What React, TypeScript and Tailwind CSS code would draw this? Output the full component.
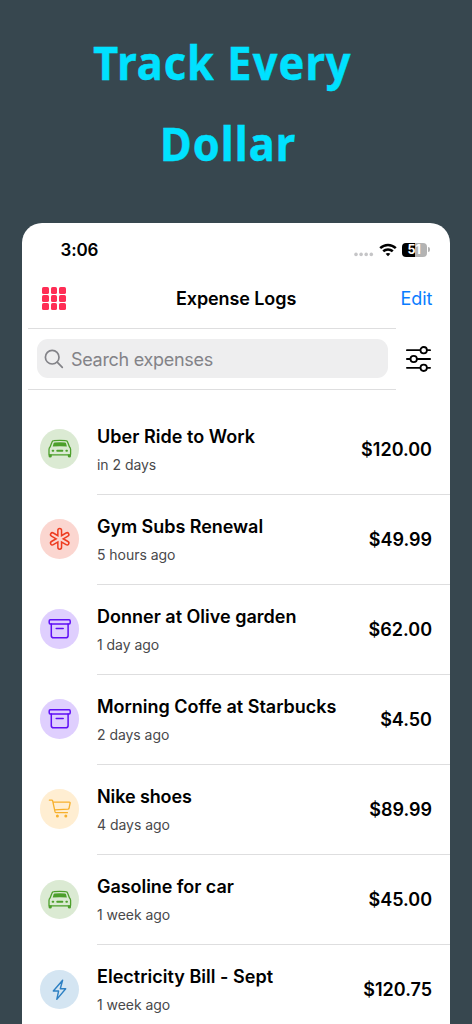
import React from 'react';
import clsx from 'clsx';

type IconName = 'car' | 'health' | 'box' | 'cart' | 'bolt';

const expenses: {title: string; time: string; amount: string; icon: IconName; titleClass: string}[] = [
    {title: 'Uber Ride to Work', time: 'in 2 days', amount: '$120.00', icon: 'car', titleClass: 'tracking-[0.04px]'},
    {title: 'Gym Subs Renewal', time: '5 hours ago', amount: '$49.99', icon: 'health', titleClass: 'tracking-[-0.05px]'},
    {title: 'Donner at Olive garden', time: '1 day ago', amount: '$62.00', icon: 'box', titleClass: 'tracking-[0px]'},
    {title: 'Morning Coffe at Starbucks', time: '2 days ago', amount: '$4.50', icon: 'box', titleClass: 'tracking-[-0.01px]'},
    {title: 'Nike shoes', time: '4 days ago', amount: '$89.99', icon: 'cart', titleClass: 'tracking-[-0.1px]'},
    {title: 'Gasoline for car', time: '1 week ago', amount: '$45.00', icon: 'car', titleClass: 'tracking-[-0.05px]'},
    {title: 'Electricity Bill - Sept', time: '1 week ago', amount: '$120.75', icon: 'bolt', titleClass: 'tracking-[0.02px]'},
];

const iconColors: Record<IconName, string> = {
    car: 'bg-[#dbead3] text-[#4c9f2b]',
    health: 'bg-[#fbd6d0] text-[#ee3c20]',
    box: 'bg-[#dfcffe] text-[#5f0ff5]',
    cart: 'bg-[#ffeed2] text-[#f7b02c]',
    bolt: 'bg-[#d4e5f2] text-[#2d80c3]',
};

function CategoryGlyph({name}: {name: IconName}) {
    switch (name) {
        case 'car':
            return (
                <>
                    <path d="M9 25.2V20.4Q9 18.9 10.2 17.7L11.9 13.3Q12.4 11.7 14 11.6Q19.8 11.1 25.6 11.6Q27.2 11.7 27.7 13.3L29.4 17.7Q30.6 18.9 30.6 20.4V25.2Q30.6 25.9 29.9 25.9H9.7Q9 25.9 9 25.2Z" strokeWidth="1.3"/>
                    <path d="M14.6 13.4Q19.8 12.9 25 13.4Q25.7 13.5 25.9 14.1L26.9 17.6Q19.8 17.1 12.7 17.6L13.7 14.1Q13.9 13.5 14.6 13.4Z" fill="currentColor" stroke="none"/>
                    <path d="M8.6 25.5V27.2Q8.6 28.6 10.2 28.6Q11.8 28.6 11.8 27.2V25.5ZM27.8 25.5V27.2Q27.8 28.6 29.4 28.6Q31 28.6 31 27.2V25.5Z" fill="currentColor" stroke="none"/>
                    <path d="M12.6 21.8H13.3M17.2 21.8H22.4M26.3 21.8H27" strokeWidth="1.9"/>
                </>
            );
        case 'health':
            return (
                <>
                    <path d="M19.7 11.4V28.3M12.4 15.6L27 24.1M12.4 24.1L27 15.6" strokeWidth="5.2"/>
                    <path d="M19.7 11.4V28.3M12.4 15.6L27 24.1M12.4 24.1L27 15.6" strokeWidth="2.2" stroke="#fbd6d0"/>
                </>
            );
        case 'box':
            return (
                <>
                    <rect x="9.2" y="10.8" width="21" height="4.1" rx="1.1" strokeWidth="1.5"/>
                    <path d="M11.3 15V26.4Q11.3 28.8 13.7 28.8H25.7Q28.1 28.8 28.1 26.4V15M16.2 19.4H23.2" strokeWidth="1.5"/>
                </>
            );
        case 'cart':
            return (
                <>
                    <path d="M9.4 11.2H11.7Q12.5 11.2 12.7 12L15 22.7Q15.3 23.7 16.3 23.7H27.4M13.1 13.2H29.4Q30.3 13.2 30.1 14.1L29.1 19Q28.9 20 27.9 20.1L14.6 20.9" strokeWidth="1.3"/>
                    <circle cx="17.4" cy="27" r="1.5" fill="currentColor" stroke="none"/>
                    <circle cx="25.8" cy="27" r="1.5" fill="currentColor" stroke="none"/>
                </>
            );
        case 'bolt':
            return <path d="M22.6 10.3L13.3 21H18.6L16.8 29.4L25.7 18.8H20.3Z" strokeWidth="1.4"/>;
    }
}

function CategoryIcon({name}: {name: IconName}) {
    return (
        <div className={clsx('mb-[1.4px] size-[39.5px] shrink-0 rounded-full', iconColors[name])}>
            <svg viewBox="0 0 39.5 39.5" className="size-full" fill="none" stroke="currentColor" strokeLinecap="round" strokeLinejoin="round">
                <CategoryGlyph name={name}/>
            </svg>
        </div>
    );
}

function StatusBar() {
    return (
        <div className="flex h-[54px] items-center justify-between pl-[38.5px] pr-[20.5px]">
            <span className="pt-[3px] text-[17px] font-semibold tracking-[-0.15px]">3:06</span>
            <div className="flex items-center">
                <svg width="20" height="16" viewBox="0 0 20 16" className="mr-[5px]" fill="#c5c5c7">
                    <circle cx="2" cy="12.4" r="1.8"/>
                    <circle cx="7.1" cy="12.4" r="1.8"/>
                    <circle cx="12.2" cy="12.4" r="1.8"/>
                    <circle cx="17.3" cy="12.4" r="1.8"/>
                </svg>
                <svg width="18" height="14" viewBox="0 0 18 14" className="mr-[5px]" fill="none" stroke="#000" strokeWidth="2.5">
                    <path d="M1.2 5.2Q4.6 1.9 9 1.9T16.8 5.2"/>
                    <path d="M4.2 8.3Q6.3 6.4 9 6.4T13.8 8.3"/>
                    <path d="M9 13.2L6.6 10.8Q9 9 11.4 10.8Z" fill="#000" stroke="none"/>
                </svg>
                <div className="flex h-[14px] w-[25.5px] items-center justify-center rounded-[4px] bg-linear-to-r from-black from-51% to-[#b3b3b3] to-51%">
                    <span className="text-[12.5px] font-bold leading-[14px] text-white">51</span>
                </div>
                <div className="ml-[1px] h-[5px] w-[1.5px] rounded-r-full bg-[#b3b3b3]"/>
            </div>
        </div>
    );
}

function GridIcon() {
    return (
        <div className="grid grid-cols-3 gap-x-[2px] gap-y-[1.5px]">
            {Array.from({length: 9}, (_, i) => (
                <span key={i} className="size-[6.6px] rounded-[1.6px] bg-[#ff2d55]"/>
            ))}
        </div>
    );
}

function SearchRow() {
    return (
        <div className="flex items-center">
            <div className="ml-[6px] flex h-[62px] w-[368px] items-center border-y border-[#dededf] pl-[8.5px]">
                <div className="flex h-[39.5px] w-[351px] items-center rounded-[11px] bg-[#eeeeef] pl-[7.5px] text-[#838388]">
                    <svg width="20" height="20" viewBox="0 0 20 20" fill="none" stroke="currentColor" strokeWidth="1.7" strokeLinecap="round">
                        <circle cx="8.2" cy="8.2" r="6.8"/>
                        <path d="M13.2 13.2L18.3 18.3"/>
                    </svg>
                    <span className="ml-[7px] pt-[2px] text-[18px] tracking-[-0.3px]">Search expenses</span>
                </div>
            </div>
            <svg width="26" height="28" viewBox="0 0 26 28" className="ml-[9px]" fill="#fff" stroke="#000" strokeWidth="1.8" strokeLinecap="round">
                <path d="M1.9 5.2H25.1M1.9 14H25.1M1.9 22.8H25.1"/>
                <circle cx="18.7" cy="5.2" r="3.2"/>
                <circle cx="8.7" cy="14" r="3.2"/>
                <circle cx="18.7" cy="22.8" r="3.2"/>
            </svg>
        </div>
    );
}

export default function App() {
    return (
        <div className="flex h-[1024px] w-[472px] flex-col overflow-hidden bg-[#37474f] font-['Inter',sans-serif] text-black">
            <h1 className="flex h-[222.5px] shrink-0 flex-col items-center pr-[27px] pt-[22px] font-['Noto_Sans',sans-serif] text-[47px] font-bold leading-[81px] tracking-[1.2px] text-[#00e1ff] [-webkit-text-stroke:0.5px_#00e1ff]">
                <span className="scale-x-92">Track Every</span>
                <span className="ml-[12px] scale-x-92">Dollar</span>
            </h1>

            <div className="mx-[22px] h-[810px] shrink-0 rounded-t-[20px] bg-white">
                <StatusBar/>
                <div className="flex h-[51px] items-center pb-[7px] pl-[20px] pr-[17.5px]">
                    <GridIcon/>
                    <h2 className="flex-1 pl-[6px] text-center text-[18px] font-semibold tracking-[-0.1px]">Expense Logs</h2>
                    <span className="text-[18px] text-[#0a7cff]">Edit</span>
                </div>
                <SearchRow/>

                <ul className="pt-[15px]">
                    {expenses.map(({title, time, amount, icon, titleClass}) => (
                        <li key={title} className="flex h-[90.1px] items-center pl-[17.5px]">
                            <CategoryIcon name={icon}/>
                            <div className="ml-[18px] flex h-full flex-1 items-center justify-between border-b border-[#dededf] pr-[18px]">
                                <div className="flex flex-col gap-[4.2px] pt-[3.2px]">
                                    <span className={clsx('whitespace-nowrap text-[18px] font-semibold leading-6', titleClass)}>{title}</span>
                                    <span className="text-[14px] leading-6 tracking-[-0.04px] text-[#49494b]">{time}</span>
                                </div>
                                <span className="text-[18px] font-semibold">{amount}</span>
                            </div>
                        </li>
                    ))}
                </ul>
            </div>
        </div>
    );
}
